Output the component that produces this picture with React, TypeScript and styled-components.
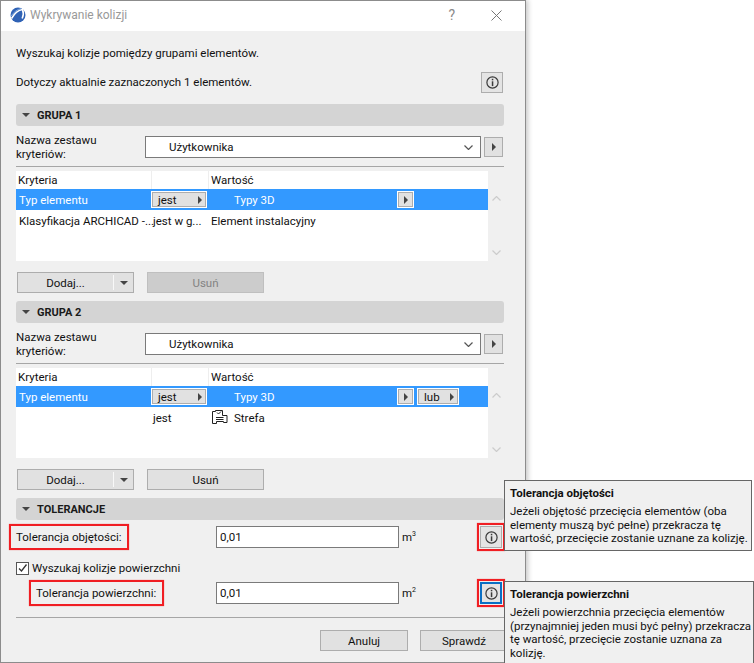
import React from "react";
import styled, { createGlobalStyle } from "styled-components";

const GlobalStyle = createGlobalStyle`
  html, body {
    margin: 0;
    padding: 0;
    background: #ffffff;
  }
  body {
    font-family: Roboto, "Noto Sans", sans-serif;
    font-size: 11.5px;
    color: #111111;
  }
`;

const Page = styled.div`
  position: relative;
  width: 754px;
  height: 663px;
  overflow: hidden;
`;

const Window = styled.div`
  box-sizing: border-box;
  width: 526px;
  height: 663px;
  background: #f0f0f0;
  border: 1px solid #8c8c8c;
  box-shadow: 2px 0 5px rgba(0, 0, 0, 0.22);
`;

const TitleBar = styled.div`
  display: flex;
  align-items: center;
  height: 30px;
  background: #ffffff;
  padding: 0 23px 2px 9px;
  box-sizing: border-box;
`;

const TitleText = styled.div`
  margin-left: 4px;
  font-size: 12px;
  color: #999999;
  flex: 1;
`;

const TitleHelp = styled.div`
  font-size: 14px;
  color: #8a8a8a;
  margin-right: 36px;
`;

const Content = styled.div`
  padding: 12px 21px 0 15px;
`;

const TextRow = styled.div<{ $top?: number }>`
  display: flex;
  align-items: center;
  justify-content: space-between;
  height: 20px;
  margin-top: ${({ $top }) => $top ?? 0}px;
  padding-right: 1px;
  white-space: nowrap;
`;

const InfoButton = styled.button<{ $focused?: boolean }>`
  box-sizing: border-box;
  display: flex;
  align-items: center;
  justify-content: center;
  width: 22px;
  height: 21px;
  padding: 0;
  background: #e4e4e4;
  border: ${({ $focused }) =>
    $focused ? "2px solid #0a6fc4" : "1px solid #adadad"};
  border-radius: 0;
  color: #333333;
`;

const ToleranceInfo = styled(InfoButton)`
  height: 22px;
`;

const SectionHeader = styled.div<{ $top: number }>`
  display: flex;
  align-items: center;
  gap: 7px;
  height: 22px;
  margin-top: ${({ $top }) => $top}px;
  padding-left: 6px;
  background: #d4d4d4;
  border-radius: 3px;
  font-size: 11px;
  font-weight: 700;
  color: #1a1a1a;
`;

const NameRow = styled.div`
  display: flex;
  align-items: center;
  height: 22px;
  margin-top: 10px;
`;

const NameLabel = styled.div`
  width: 129px;
  line-height: 14px;
`;

const Select = styled.div`
  box-sizing: border-box;
  display: flex;
  align-items: center;
  justify-content: space-between;
  width: 336px;
  height: 22px;
  padding: 0 7px 0 23px;
  background: #ffffff;
  border: 1px solid #7a7a7a;
`;

const ArrowButton = styled.div<{ $outlined?: boolean; $width?: number }>`
  box-sizing: border-box;
  display: flex;
  align-items: center;
  justify-content: center;
  flex: none;
  width: ${({ $width }) => $width ?? 17}px;
  height: ${({ $outlined }) => ($outlined ? 15 : 20)}px;
  margin-left: ${({ $outlined }) => ($outlined ? 0 : 3)}px;
  background: #e1e1e1;
  border: 1px solid #adadad;
  outline: ${({ $outlined }) => ($outlined ? "1px solid #ffffff" : "none")};
`;

const Divider = styled.div<{ $top: number }>`
  height: 1px;
  margin-top: ${({ $top }) => $top}px;
  background: #a6a6a6;
`;

const TableWrap = styled.div`
  display: flex;
  margin-top: 4px;
  height: 90px;
`;

const Table = styled.div`
  width: 472px;
  background: #ffffff;
`;

const Row = styled.div<{ $selected?: boolean; $height: number }>`
  display: grid;
  grid-template-columns: 135px 57px 1fr;
  align-items: center;
  height: ${({ $height }) => $height}px;
  background: ${({ $selected }) => ($selected ? "#3399ff" : "transparent")};
  color: ${({ $selected }) => ($selected ? "#ffffff" : "#111111")};
  white-space: nowrap;
`;

const HeaderCell = styled.div<{ $divided?: boolean }>`
  height: 100%;
  display: flex;
  align-items: center;
  padding-left: 2px;
  padding-bottom: 1px;
  box-sizing: border-box;
  border-left: ${({ $divided }) => ($divided ? "1px solid #eeeeee" : "none")};
`;

const Cell = styled.div<{ $pad?: number }>`
  display: flex;
  align-items: center;
  padding-left: ${({ $pad }) => $pad ?? 3}px;
  min-width: 0;
`;

const ValueText = styled.span`
  width: 164px;
`;

const OperatorButton = styled.div<{ $width: number; $gap?: number }>`
  box-sizing: border-box;
  display: flex;
  align-items: center;
  justify-content: space-between;
  flex: none;
  width: ${({ $width }) => $width}px;
  height: 15px;
  margin-left: ${({ $gap }) => $gap ?? 0}px;
  padding: 0 3px 0 5px;
  background: #e1e1e1;
  border: 1px solid #adadad;
  outline: 1px solid #ffffff;
  color: #111111;
`;

const ScrollColumn = styled.div`
  display: flex;
  flex-direction: column;
  justify-content: space-between;
  align-items: center;
  width: 16px;
  padding: 25px 0 6px;
  box-sizing: border-box;
  color: #cccccc;
`;

const ButtonRow = styled.div`
  display: flex;
  gap: 13px;
  margin-top: 11px;
  padding-left: 1px;
`;

const Button = styled.button<{ $disabled?: boolean; $width?: number }>`
  box-sizing: border-box;
  display: flex;
  align-items: center;
  justify-content: center;
  width: ${({ $width }) => $width ?? 117}px;
  height: 21px;
  padding: 0;
  background: ${({ $disabled }) => ($disabled ? "#cccccc" : "#e1e1e1")};
  border: 1px solid ${({ $disabled }) => ($disabled ? "#bfbfbf" : "#adadad")};
  border-radius: 0;
  color: ${({ $disabled }) => ($disabled ? "#838383" : "#111111")};
  font: inherit;
`;

const SplitButton = styled(Button)`
  justify-content: flex-start;
`;

const SplitLabel = styled.span`
  width: 95px;
  text-align: center;
`;

const SplitArrow = styled.span`
  display: flex;
  flex: 1;
  height: 15px;
  align-items: center;
  justify-content: center;
  border-left: 1px solid #f8f8f8;
`;

const ToleranceRow = styled.div<{ $top: number }>`
  display: flex;
  align-items: center;
  height: 22px;
  margin-top: ${({ $top }) => $top}px;
`;

const MarkedLabel = styled.div<{ $indent?: number; $width: number; $boxRight: number }>`
  position: relative;
  flex: none;
  width: ${({ $width }) => $width}px;
  margin-left: ${({ $indent }) => $indent ?? 0}px;
  white-space: nowrap;

  &::after {
    content: "";
    position: absolute;
    left: -7px;
    right: ${({ $boxRight }) => $boxRight}px;
    top: -6px;
    bottom: -6px;
    border: 2px solid #f01e23;
    box-shadow: 0 0 1px rgba(240, 30, 35, 0.6);
  }
`;

const Input = styled.div`
  box-sizing: border-box;
  display: flex;
  align-items: center;
  width: 183px;
  height: 22px;
  padding-left: 3px;
  background: #ffffff;
  border: 1px solid #7a7a7a;
`;

const Unit = styled.div`
  width: 81px;
  padding-left: 3px;
  box-sizing: border-box;

  sup {
    font-size: 7px;
    line-height: 0;
  }
`;

const MarkedIcon = styled.div`
  position: relative;
  display: flex;

  &::after {
    content: "";
    position: absolute;
    inset: -3px;
    border: 2px solid #f01e23;
    box-shadow: 0 0 1px rgba(240, 30, 35, 0.6);
  }
`;

const CheckRow = styled.label`
  display: flex;
  align-items: center;
  gap: 3px;
  height: 16px;
  margin-top: 12px;
`;

const CheckBox = styled.span`
  box-sizing: border-box;
  display: flex;
  width: 13px;
  height: 13px;
  background: #ffffff;
  border: 1px solid #555555;
`;

const Footer = styled.div`
  display: flex;
  justify-content: flex-end;
  gap: 12px;
  margin: 12px -4px 0 0;
`;

const Tooltip = styled.div<{ $top: number; $width: number }>`
  position: absolute;
  left: 504px;
  top: ${({ $top }) => $top}px;
  box-sizing: border-box;
  width: ${({ $width }) => $width}px;
  padding: 6px 5px 4px 5px;
  background: #f0f0f0;
  border: 1px solid #666666;
  line-height: 13.4px;
  white-space: nowrap;
`;

const TooltipTitle = styled.div`
  font-weight: 700;
  margin-bottom: 5px;
`;

const Logo = () => (
  <svg width="16" height="16" viewBox="0 0 16 16">
    <circle cx="8" cy="8" r="7.5" fill="#2f62b5" />
    <path d="M1.500 11.500C5 5.500 8.500 3 12.500 2.500c1 2.500 1 6-.3 9" fill="none" stroke="#ffffff" strokeWidth="1.6" />
    <path d="M1 9c3-4 6-6.500 10-7.500" fill="none" stroke="#8fb6e8" strokeWidth="0.8" />
  </svg>
);

const CloseIcon = () => (
  <svg width="11" height="11" viewBox="0 0 11 11">
    <path d="M.5.5l10 10M10.500.5l-10 10" stroke="#777777" strokeWidth="1" fill="none" />
  </svg>
);

const InfoIcon = () => (
  <svg width="13" height="13" viewBox="0 0 13 13">
    <circle cx="6.5" cy="6.5" r="5.6" fill="none" stroke="#3a3a3a" strokeWidth="1.2" />
    <rect x="5.8" y="2.800" width="1.5" height="1.5" fill="#3a3a3a" />
    <rect x="5.8" y="5.300" width="1.5" height="4.800" fill="#3a3a3a" />
  </svg>
);

const TriangleDown = () => (
  <svg width="8" height="4" viewBox="0 0 8 4">
    <path d="M0 0h8L4 4z" fill="#444444" />
  </svg>
);

const TriangleRight = () => (
  <svg width="4" height="8" viewBox="0 0 4 8">
    <path d="M0 0l4 4-4 4z" fill="#444444" />
  </svg>
);

const Chevron = ({ up, color = "currentColor" }: { up?: boolean; color?: string }) => (
  <svg width="9" height="5" viewBox="0 0 9 5">
    <path d={up ? "M.5 4.500l4-4 4 4" : "M.5.500l4 4 4-4"} fill="none" stroke={color} strokeWidth="1.2" />
  </svg>
);

const ZoneIcon = () => (
  <svg width="16" height="15" viewBox="0 0 16 15" style={{ marginRight: 6 }}>
    <path d="M.5 1.500H3.500V.500H10.500V5.500H15V12.500H11.500V11.500H4.500V13.500H.5z" fill="none" stroke="#222222" />
    <path d="M5 2.500l1.500 1.500L9 1.500M4 7.500H11.500M4 9.500H11.500" fill="none" stroke="#222222" />
  </svg>
);

interface GroupProps {
  title: string;
  top: number;
  removeDisabled?: boolean;
  secondRow: React.ReactNode;
  withLub?: boolean;
}

const Group = ({ title, top, removeDisabled, secondRow, withLub }: GroupProps) => (
  <>
    <SectionHeader $top={top}>
      <TriangleDown />
      {title}
    </SectionHeader>
    <NameRow>
      <NameLabel>
        Nazwa zestawu
        <br />
        kryteriów:
      </NameLabel>
      <Select>
        Użytkownika
        <Chevron color="#555555" />
      </Select>
      <ArrowButton $width={19}>
        <TriangleRight />
      </ArrowButton>
    </NameRow>
    <Divider $top={8} />
    <TableWrap>
      <Table>
        <Row $height={18}>
          <HeaderCell>Kryteria</HeaderCell>
          <HeaderCell $divided />
          <HeaderCell $divided>Wartość</HeaderCell>
        </Row>
        <Row $height={21} $selected>
          <Cell>Typ elementu</Cell>
          <Cell $pad={1}>
            <OperatorButton $width={54}>
              jest
              <TriangleRight />
            </OperatorButton>
          </Cell>
          <Cell $pad={26}>
            <ValueText>Typy 3D</ValueText>
            <ArrowButton $outlined $width={15}>
              <TriangleRight />
            </ArrowButton>
            {withLub && (
              <OperatorButton $width={40} $gap={5}>
                lub
                <TriangleRight />
              </OperatorButton>
            )}
          </Cell>
        </Row>
        {secondRow}
      </Table>
      <ScrollColumn>
        <Chevron up />
        <Chevron />
      </ScrollColumn>
    </TableWrap>
    <ButtonRow>
      <SplitButton>
        <SplitLabel>Dodaj...</SplitLabel>
        <SplitArrow>
          <TriangleDown />
        </SplitArrow>
      </SplitButton>
      <Button $disabled={removeDisabled}>Usuń</Button>
    </ButtonRow>
  </>
);

export default function App() {
  return (
    <Page>
      <GlobalStyle />
      <Window>
        <TitleBar>
          <Logo />
          <TitleText>Wykrywanie kolizji</TitleText>
          <TitleHelp>?</TitleHelp>
          <CloseIcon />
        </TitleBar>
        <Content>
          <TextRow>Wyszukaj kolizje pomiędzy grupami elementów.</TextRow>
          <TextRow $top={9}>
            Dotyczy aktualnie zaznaczonych 1 elementów.
            <InfoButton>
              <InfoIcon />
            </InfoButton>
          </TextRow>
          <Group
            title="GRUPA 1"
            top={12}
            removeDisabled
            secondRow={
              <Row $height={21}>
                <Cell>Klasyfikacja ARCHICAD -...</Cell>
                <Cell $pad={2}>jest w g...</Cell>
                <Cell>Element instalacyjny</Cell>
              </Row>
            }
          />
          <Group
            title="GRUPA 2"
            top={8}
            withLub
            secondRow={
              <Row $height={21}>
                <Cell />
                <Cell $pad={2}>jest</Cell>
                <Cell $pad={4}>
                  <ZoneIcon />
                  Strefa
                </Cell>
              </Row>
            }
          />
          <SectionHeader $top={8}>
            <TriangleDown />
            TOLERANCJE
          </SectionHeader>
          <ToleranceRow $top={6}>
            <MarkedLabel $width={200} $boxRight={87}>
              Tolerancja objętości:
            </MarkedLabel>
            <Input>0,01</Input>
            <Unit>
              m<sup>3</sup>
            </Unit>
            <MarkedIcon>
              <ToleranceInfo>
                <InfoIcon />
              </ToleranceInfo>
            </MarkedIcon>
          </ToleranceRow>
          <CheckRow>
            <CheckBox>
              <svg width="11" height="11" viewBox="0 0 11 11">
                <path d="M2 5.500l2.500 2.500L9.500 1.500" fill="none" stroke="#333333" strokeWidth="1.3" />
              </svg>
            </CheckBox>
            Wyszukaj kolizje powierzchni
          </CheckRow>
          <ToleranceRow $top={6}>
            <MarkedLabel $indent={20} $width={180} $boxRight={52}>
              Tolerancja powierzchni:
            </MarkedLabel>
            <Input>0,01</Input>
            <Unit>
              m<sup>2</sup>
            </Unit>
            <MarkedIcon>
              <ToleranceInfo $focused>
                <InfoIcon />
              </ToleranceInfo>
            </MarkedIcon>
          </ToleranceRow>
          <Divider $top={13} />
          <Footer>
            <Button $width={88}>Anuluj</Button>
            <Button $width={88}>Sprawdź</Button>
          </Footer>
        </Content>
      </Window>
      <Tooltip $top={480} $width={248}>
        <TooltipTitle>Tolerancja objętości</TooltipTitle>
        Jeżeli objętość przecięcia elementów (oba
        <br />
        elementy muszą być pełne) przekracza tę
        <br />
        wartość, przecięcie zostanie uznane za kolizję.
      </Tooltip>
      <Tooltip $top={581} $width={250}>
        <TooltipTitle>Tolerancja powierzchni</TooltipTitle>
        Jeżeli powierzchnia przecięcia elementów
        <br />
        (przynajmniej jeden musi być pełny) przekracza
        <br />
        tę wartość, przecięcie zostanie uznana za
        <br />
        kolizję.
      </Tooltip>
    </Page>
  );
}
